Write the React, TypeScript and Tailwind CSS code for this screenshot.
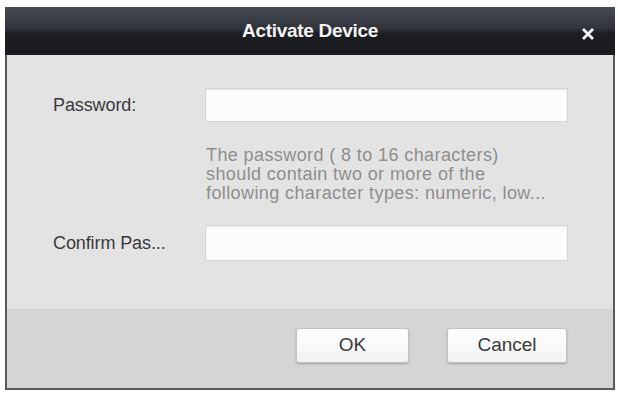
export default function App() {
  return (
    <div className="w-[618px] h-[393px] bg-white pt-[7px] pl-[5px] pr-[3px] pb-[3px] font-['Liberation_Sans',Arial,sans-serif]">
      <div className="h-full flex flex-col border-x-2 border-b-2 border-[#5a5a5a]">
        <div className="h-[48px] -mx-[2px] shrink-0 flex items-center relative bg-[linear-gradient(to_bottom,#464a53_0%,#30333a_45%,#1d1e22_55%,#1a1b1f_100%)]">
          <div className="flex-1 text-center text-[#f4f4f4] font-bold text-[19px] tracking-[-0.3px]">Activate Device</div>
          <svg className="absolute right-[21px] top-[21px]" width="12" height="12" viewBox="0 0 12 12">
            <path d="M2 2 L10 10 M10 2 L2 10" stroke="#f2f2f2" strokeWidth="2.8" strokeLinecap="square" />
          </svg>
        </div>
        <div className="h-[254px] shrink-0 bg-[#e3e3e3] pt-[33px] pl-[46px]">
          <div className="grid grid-cols-[152px_363px] items-center text-[#3a3a3a]">
            <div className="text-[18px] tracking-[-0.1px]">Password:</div>
            <div className="h-[34px] bg-[#fcfcfc] border border-[#d4d4d4] shadow-[inset_0_1px_2px_rgba(0,0,0,0.08)]" />
            <div />
            <div className="mt-[24px] pl-[1px] text-[18px] text-[#8e8e8e] leading-[19px] tracking-[0.4px]">
              <div>The password ( 8 to 16 characters)</div>
              <div>should contain two or more of the</div>
              <div>following character types: numeric, low...</div>
            </div>
            <div className="mt-[22px] text-[18px] tracking-[-0.1px]">Confirm Pas...</div>
            <div className="mt-[22px] h-[36px] bg-[#fcfcfc] border border-[#d4d4d4] shadow-[inset_0_1px_2px_rgba(0,0,0,0.08)]" />
          </div>
        </div>
        <div className="flex-1 bg-[#d5d5d5] border-t border-[#d0d0d0] flex items-start justify-end pt-[18px] pr-[46px] gap-[38px]">
          <button className="w-[113px] h-[35px] rounded-[3px] border border-[#c4c4c4] bg-[linear-gradient(to_bottom,#ffffff,#f2f2f2)] shadow-[0_1px_2px_rgba(0,0,0,0.25)] text-[19px] text-[#3a3a3a]">
            OK
          </button>
          <button className="w-[120px] h-[35px] rounded-[3px] border border-[#c4c4c4] bg-[linear-gradient(to_bottom,#ffffff,#f2f2f2)] shadow-[0_1px_2px_rgba(0,0,0,0.25)] text-[19px] text-[#3a3a3a]">
            Cancel
          </button>
        </div>
      </div>
    </div>
  );
}
